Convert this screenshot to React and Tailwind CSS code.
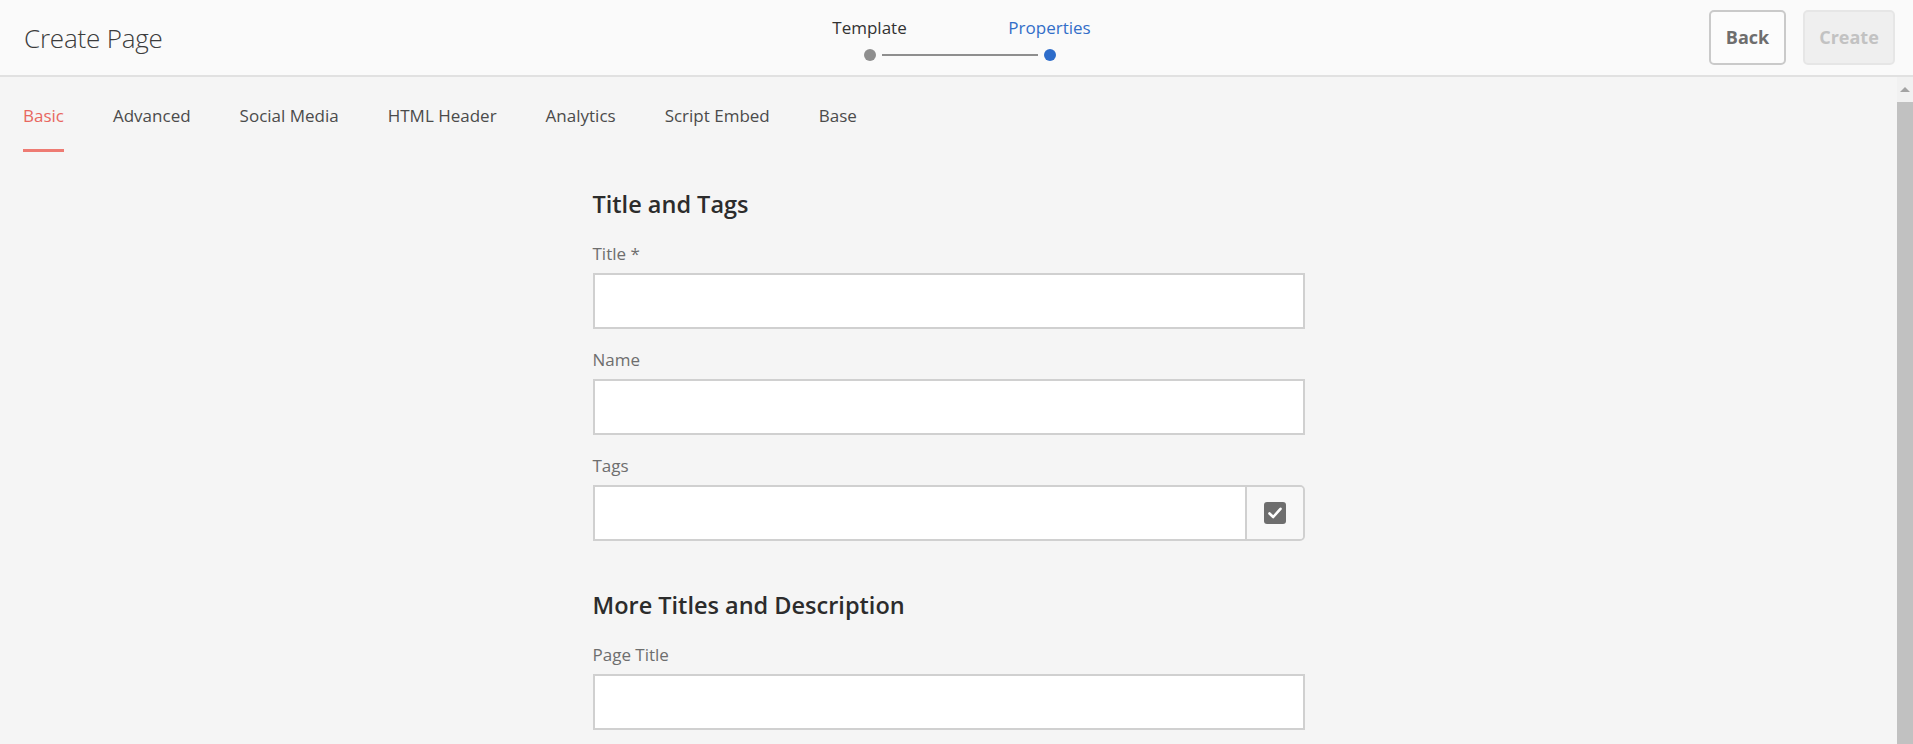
import { useState } from 'react';

const tabs = ['Basic', 'Advanced', 'Social Media', 'HTML Header', 'Analytics', 'Script Embed', 'Base'];

function Field({ label, first }) {
  return (
    <div className={first ? 'mt-[23px]' : 'mt-[19px]'}>
      <div className="text-[17px] leading-[24px] text-[#6e6e6e] mb-[7px]">{label}</div>
      <div className="h-[56px] bg-white border-2 border-[#d0d0d0]" />
    </div>
  );
}

function CheckIcon() {
  return (
    <svg width="22" height="22" viewBox="0 0 22 22">
      <rect x="0" y="0" width="22" height="22" rx="3" fill="#6e6e6e" />
      <path d="M5.5 11.5L9.2 15L16.5 6.8" stroke="white" strokeWidth="2.6" fill="none" strokeLinecap="round" strokeLinejoin="round" />
    </svg>
  );
}

export default function App() {
  const [active, setActive] = useState('Basic');

  return (
    <div className="h-[744px] w-full flex flex-col overflow-hidden bg-[#f5f5f5] font-['Open_Sans',sans-serif]">
      {/* Header */}
      <header className="h-[77px] shrink-0 flex items-stretch bg-[#fafafa] border-b-2 border-[#e1e1e1] pl-[24px] pr-[18px]">
        <div className="flex-1 flex items-center">
          <h1 className="text-[26px] font-light text-[#3c3c3c] leading-none tracking-[-0.2px]">Create Page</h1>
        </div>

        {/* Stepper */}
        <div className="w-[360px] pt-[17px]">
          <div className="grid grid-cols-2">
            <div className="text-center text-[17px] leading-[22px] text-[#323232]">Template</div>
            <div className="text-center text-[17px] leading-[22px] text-[#326ec8]">Properties</div>
          </div>
          <div className="mt-[10px] flex items-center px-[84px]">
            <div className="w-3 h-3 rounded-full bg-[#8e8e8e]" />
            <div className="flex-1 h-[2px] mx-[6px] bg-[#8e8e8e]" />
            <div className="w-3 h-3 rounded-full bg-[#2d6cca]" />
          </div>
        </div>

        <div className="flex-1 flex items-center justify-end gap-[17px]">
          <button className="w-[77px] h-[55px] rounded-[5px] border-2 border-[#cacaca] bg-[#fcfcfc] text-[18px] font-bold text-[#6e6e6e]">
            Back
          </button>
          <button className="w-[92px] h-[55px] rounded-[5px] border-2 border-[#e6e6e6] bg-[#efefef] text-[18px] font-bold text-[#c2c2c2]">
            Create
          </button>
        </div>
      </header>

      {/* Body */}
      <div className="flex-1 flex min-h-0">
        <main className="flex-1 overflow-hidden">
          {/* Tabs */}
          <nav className="flex gap-[49px] pl-[23px]">
            {tabs.map((t) => (
              <button
                key={t}
                onClick={() => setActive(t)}
                className={`pt-[27px] pb-[21px] border-b-[3px] text-[17px] leading-[24px] ${
                  active === t ? 'border-[#ee7b73] text-[#e8675f]' : 'border-transparent text-[#4b4b4b]'
                }`}
              >
                {t}
              </button>
            ))}
          </nav>

          {/* Form */}
          <div className="w-[712px] mx-auto mt-[37px]">
            <h2 className="text-[23.5px] leading-[30px] font-semibold text-[#2c2c2c]">Title and Tags</h2>
            <Field label="Title *" first />
            <Field label="Name" />

            <div className="mt-[19px]">
              <div className="text-[17px] leading-[24px] text-[#6e6e6e] mb-[7px]">Tags</div>
              <div className="h-[56px] flex border-2 border-[#d0d0d0] rounded-r-[5px] overflow-hidden">
                <div className="flex-1 bg-white" />
                <div className="w-[58px] flex items-center justify-center bg-[#f8f8f8] border-l-2 border-[#d0d0d0]">
                  <CheckIcon />
                </div>
              </div>
            </div>

            <h2 className="mt-[49px] text-[23.5px] leading-[30px] font-semibold text-[#2c2c2c]">More Titles and Description</h2>
            <Field label="Page Title" first />
          </div>
        </main>

        {/* Scrollbar */}
        <div className="w-4 shrink-0 flex flex-col bg-[#f1f1f1]">
          <div className="h-[25px] flex justify-center pt-[10px]">
            <div className="w-0 h-0 border-l-[5px] border-r-[5px] border-b-[5px] border-l-transparent border-r-transparent border-b-[#a3a3a3]" />
          </div>
          <div className="flex-1 bg-[#c1c1c1]" />
        </div>
      </div>
    </div>
  );
}
